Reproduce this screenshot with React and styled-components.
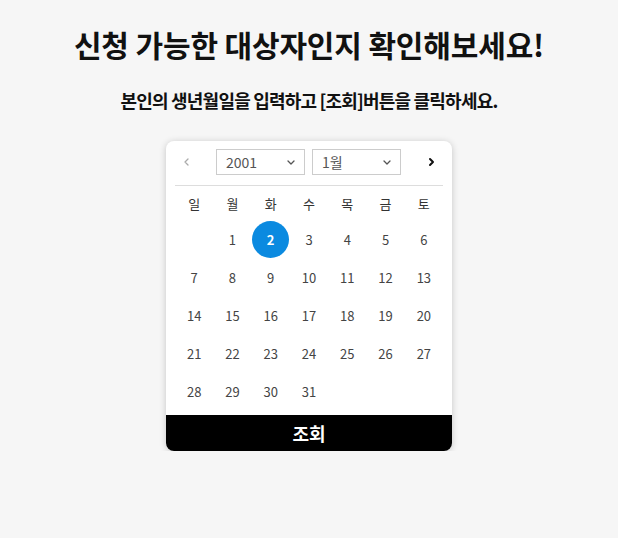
import React, { useState } from 'react';
import styled, { createGlobalStyle } from 'styled-components';

const GlobalStyle = createGlobalStyle`
  body {
    margin: 0;
    background: #f6f6f6;
    font-family: "Noto Sans CJK KR", "Noto Sans", sans-serif;
  }
`;

const Page = styled.main`
  display: flex;
  flex-direction: column;
  align-items: center;
`;

const Title = styled.h1`
  margin: 26px 0 0;
  font-size: 30px;
  line-height: 36px;
  font-weight: 700;
  letter-spacing: -0.15px;
  color: #111;
`;

const Subtitle = styled.p`
  margin: 26px 0 0;
  font-size: 18px;
  line-height: 24px;
  font-weight: 700;
  letter-spacing: -0.8px;
  color: #111;
`;

const Card = styled.section`
  margin-top: 29px;
  width: 286px;
  background: #fff;
  border-radius: 8px;
  box-shadow: 0 1px 7px rgba(0, 0, 0, 0.2);
  overflow: hidden;
  display: flex;
  flex-direction: column;
`;

const Header = styled.div`
  margin: 8px 9px 0;
  height: 36px;
  display: flex;
  align-items: flex-start;
  border-bottom: 1px solid #ddd;
`;

const Arrow = styled.button`
  width: 24px;
  height: 26px;
  padding: 0;
  border: 0;
  background: none;
  display: flex;
  align-items: center;
  justify-content: center;
  color: ${p => (p.$disabled ? '#aaa' : '#111')};
`;

const Selects = styled.div`
  flex: 1;
  display: flex;
  gap: 7px;
  padding-left: 17px;
`;

const Select = styled.div`
  width: 89px;
  height: 26px;
  box-sizing: border-box;
  border: 1px solid #ccc;
  display: flex;
  align-items: center;
  justify-content: space-between;
  padding: 0 8px 0 9px;
  font-size: 14px;
  color: #555;
`;

const Grid = styled.div`
  margin: 0 9px;
  display: grid;
  grid-template-columns: repeat(7, 1fr);
  grid-template-rows: 34px;
  grid-auto-rows: 38px;
`;

const WeekDay = styled.div`
  display: flex;
  align-items: center;
  justify-content: center;
  font-size: 13px;
  color: #333;
`;

const Day = styled.div`
  display: flex;
  align-items: center;
  justify-content: center;
`;

const DayNum = styled.span`
  width: 37px;
  height: 37px;
  border-radius: 50%;
  display: flex;
  align-items: center;
  justify-content: center;
  font-size: 13px;
  color: ${p => (p.$selected ? '#fff' : '#444')};
  background: ${p => (p.$selected ? '#0b8ae0' : 'transparent')};
  font-weight: ${p => (p.$selected ? 700 : 400)};
`;

const Submit = styled.button`
  margin-top: 5px;
  height: 36px;
  border: 0;
  background: #000;
  color: #fff;
  font-family: inherit;
  font-size: 18px;
  font-weight: 700;
`;

const Chevron = ({ dir = 'down', size = 10 }) => {
  const d = {
    down: 'M2 4l3 3 3-3',
    left: 'M6 2L3 5l3 3',
    right: 'M4 2l3 3-3 3',
  }[dir];
  return (
    <svg width={size} height={size} viewBox="0 0 10 10" fill="none">
      <path d={d} stroke="currentColor" strokeWidth={dir === 'right' ? 2 : 1.3} strokeLinecap="round" strokeLinejoin="round" />
    </svg>
  );
};

const weekDays = ['일', '월', '화', '수', '목', '금', '토'];

export default function App() {
  const [selected, setSelected] = useState(2);
  // January 2001 starts on a Monday
  const cells = [null, ...Array.from({ length: 31 }, (_, i) => i + 1)];

  return (
    <Page>
      <GlobalStyle />
      <Title>신청 가능한 대상자인지 확인해보세요!</Title>
      <Subtitle>본인의 생년월일을 입력하고 [조회]버튼을 클릭하세요.</Subtitle>
      <Card>
        <Header>
          <Arrow $disabled>
            <Chevron dir="left" />
          </Arrow>
          <Selects>
            <Select>
              2001 <Chevron />
            </Select>
            <Select>
              1월 <Chevron />
            </Select>
          </Selects>
          <Arrow>
            <Chevron dir="right" />
          </Arrow>
        </Header>
        <Grid>
          {weekDays.map(w => (
            <WeekDay key={w}>{w}</WeekDay>
          ))}
          {cells.map((d, i) => (
            <Day key={i} onClick={() => d && setSelected(d)}>
              {d && <DayNum $selected={d === selected}>{d}</DayNum>}
            </Day>
          ))}
        </Grid>
        <Submit>조회</Submit>
      </Card>
    </Page>
  );
}
